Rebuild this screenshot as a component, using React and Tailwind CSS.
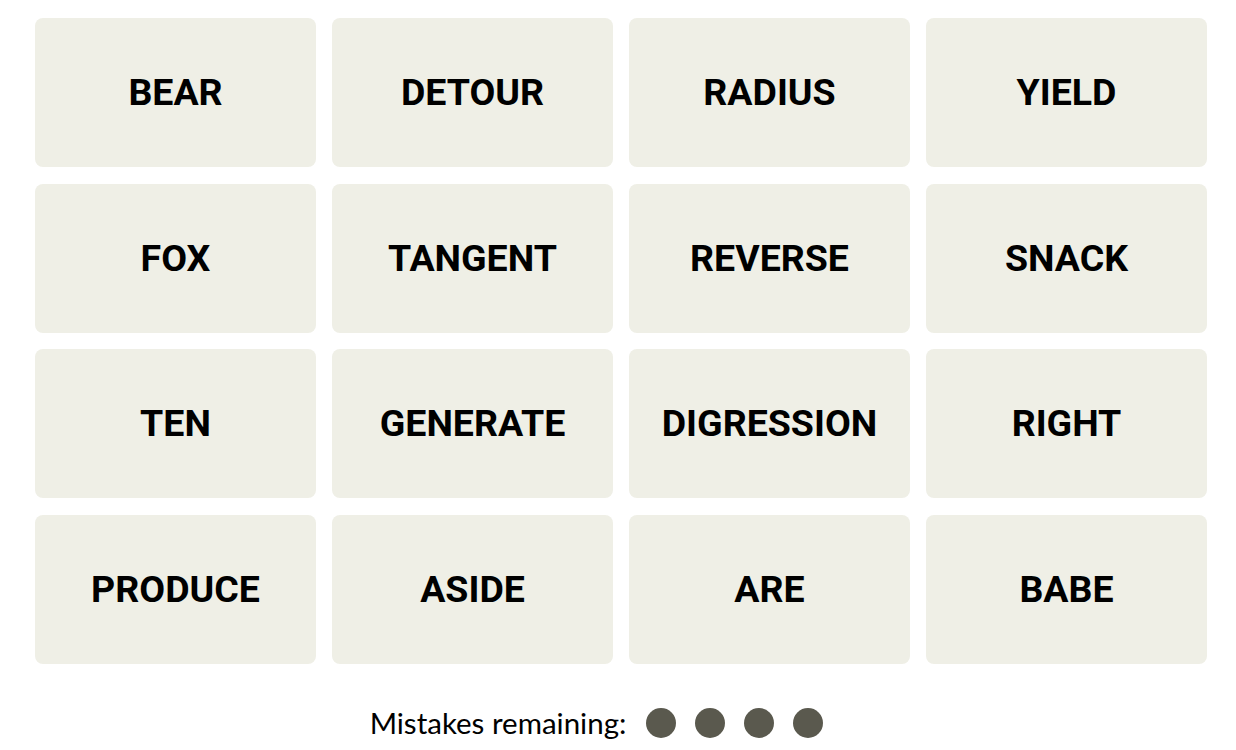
const words = [
  "BEAR", "DETOUR", "RADIUS", "YIELD",
  "FOX", "TANGENT", "REVERSE", "SNACK",
  "TEN", "GENERATE", "DIGRESSION", "RIGHT",
  "PRODUCE", "ASIDE", "ARE", "BABE",
];

export default function App() {
  return (
    <div className="w-[1236px] h-[750px] bg-white overflow-hidden">
      <div className="pt-[18px] px-[35px] grid grid-cols-[repeat(4,281px)] auto-rows-[149px] gap-x-[16px] gap-y-[16.5px]">
        {words.map((w) => (
          <div
            key={w}
            className="bg-[#efefe6] rounded-[8px] flex items-center justify-center text-black font-bold text-[37.5px]"
            style={{ fontFamily: "Roboto, 'Liberation Sans', sans-serif" }}
          >
            {w}
          </div>
        ))}
      </div>
      <div className="mt-[44px] flex items-center justify-center gap-[20px] pr-[43px]">
        <span
          className="text-[29.5px] text-black leading-none"
          style={{ fontFamily: "Lato, 'Liberation Sans', sans-serif" }}
        >
          Mistakes remaining:
        </span>
        <div className="flex gap-[19px]">
          {[0, 1, 2, 3].map((i) => (
            <div key={i} className="w-[30px] h-[30px] rounded-full bg-[#5a594e]" />
          ))}
        </div>
      </div>
    </div>
  );
}
